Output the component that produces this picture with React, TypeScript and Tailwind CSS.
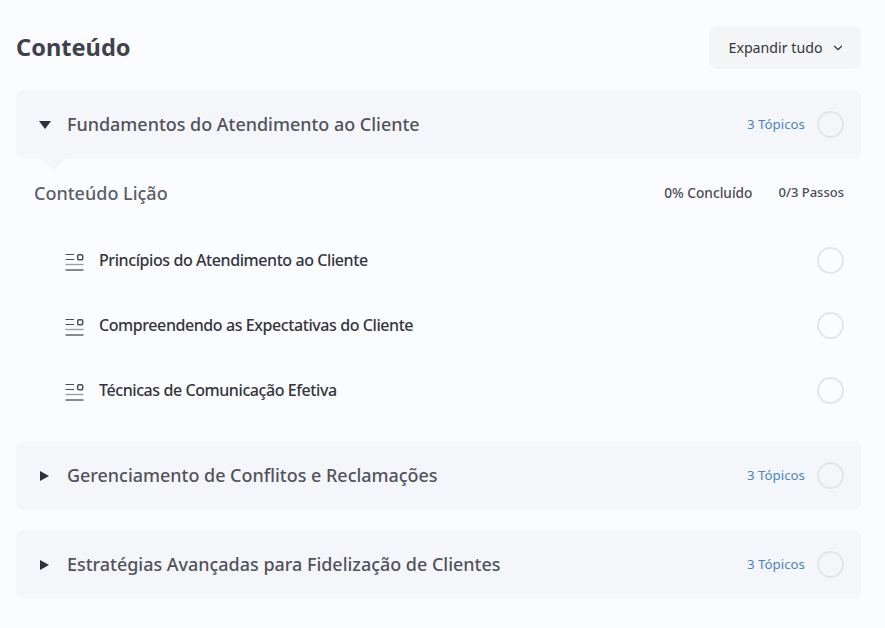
import { ChevronDown } from "lucide-react";

const lessons = [
  "Princípios do Atendimento ao Cliente",
  "Compreendendo as Expectativas do Cliente",
  "Técnicas de Comunicação Efetiva",
];

function Circle() {
  return <span className="block h-[27px] w-[27px] shrink-0 rounded-full border-2 border-[#e4e5e8]" />;
}

function TopicIcon() {
  return (
    <svg width="19" height="19" viewBox="0 0 19 19" fill="none" className="mt-[5px] shrink-0" stroke="#4a4d55">
      <path d="M0.5 1.5H9M0.5 6.5H9" strokeWidth="1.2" />
      <rect x="12.7" y="1.7" width="5" height="5" rx="1.2" strokeWidth="1.5" />
      <path d="M0.5 11.5H18.5" strokeWidth="1.3" stroke="#9a9ca3" />
      <path d="M0.5 17H18.5" strokeWidth="1.3" />
    </svg>
  );
}

function Section({ title, open }: { title: string; open?: boolean }) {
  return (
    <div className="relative flex h-[69px] items-center rounded-lg bg-[#f5f6fa] pl-[22px] pr-[17px]">
      <span className="flex w-[29px] shrink-0 items-center">
        {open ? (
          <span className="ml-px block h-0 w-0 border-x-[6.5px] border-t-[8px] border-x-transparent border-t-[#2f3138]" />
        ) : (
          <span className="ml-0.5 block h-0 w-0 border-y-[5.5px] border-l-[9px] border-y-transparent border-l-[#2f3138]" />
        )}
      </span>
      <span className="text-[17.95px] font-medium text-[#50535c]">{title}</span>
      <span className="ml-auto mr-3 text-[13.3px] text-[#4a86c5]">3 Tópicos</span>
      <Circle />
      {open && (
        <span className="absolute left-[26px] top-full h-0 w-0 border-x-[12px] border-t-[12px] border-x-transparent border-t-[#f5f6fa]" />
      )}
    </div>
  );
}

export default function App() {
  return (
    <div className="min-h-[628px] w-[885px] bg-[#fbfcff] px-4 pt-[26px] font-['Noto_Sans',sans-serif] text-[#3f424a]">
      <header className="mr-2 flex h-[43px] items-center justify-between">
        <h1 className="text-[23.6px] font-bold text-[#3f424a]">Conteúdo</h1>
        <button className="flex h-[43px] w-[152px] items-center justify-center gap-[9px] rounded-lg bg-[#f4f5f7] pl-1 text-[14.2px] text-[#33363d]">
          Expandir tudo
          <ChevronDown size={14} strokeWidth={2} />
        </button>
      </header>

      <div className="mr-2 mt-[21px]">
        <Section title="Fundamentos do Atendimento ao Cliente" open />

        <div className="flex items-center justify-between pl-[18px] pr-[17px] pt-[21px]">
          <span className="text-[18px] font-medium text-[#5b5e66]">Conteúdo Lição</span>
          <div className="flex gap-[26px] font-medium text-[#4a4d55]">
            <span className="text-[13.7px]">0% Concluído</span>
            <span className="text-[13px]">0/3 Passos</span>
          </div>
        </div>

        <ul className="mt-[33px] flex flex-col gap-[25px] pl-[49px] pr-[17px]">
          {lessons.map((lesson) => (
            <li key={lesson} className="flex h-10 items-center">
              <TopicIcon />
              <span className="ml-[15px] text-[16px] font-medium tracking-[-0.42px] text-[#33363d]">{lesson}</span>
              <span className="ml-auto">
                <Circle />
              </span>
            </li>
          ))}
        </ul>

        <div className="mt-[31px] flex flex-col gap-5">
          <Section title="Gerenciamento de Conflitos e Reclamações" />
          <Section title="Estratégias Avançadas para Fidelização de Clientes" />
        </div>
      </div>
    </div>
  );
}
